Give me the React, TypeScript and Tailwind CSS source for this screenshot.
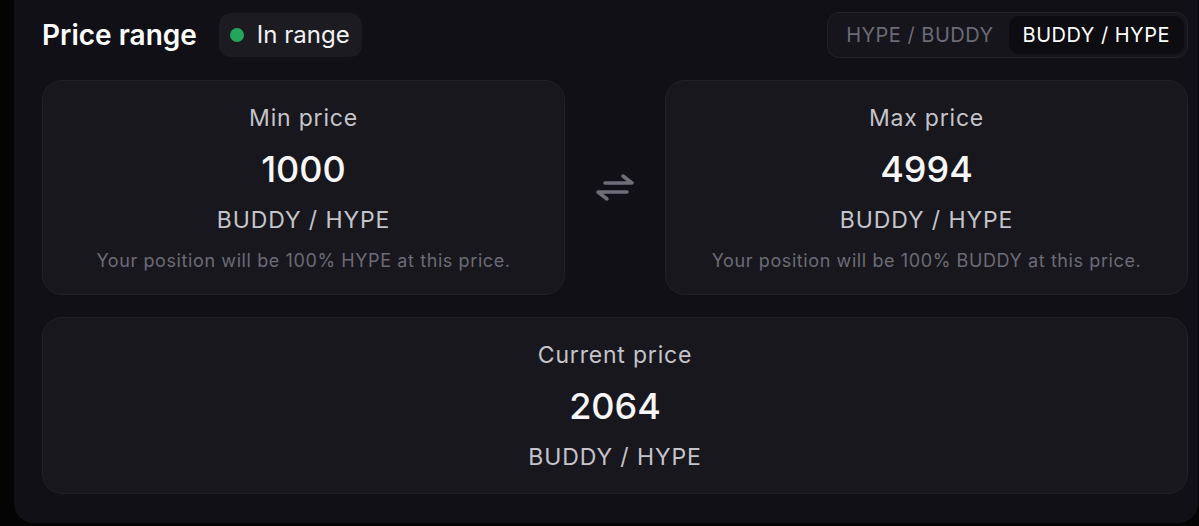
import React from 'react';

const SwapIcon: React.FC = () => (
  <svg width="40" height="30" viewBox="0 0 40 30" fill="none" stroke="#6e6d7a" strokeWidth="3.5" strokeLinecap="round" strokeLinejoin="round">
    <path d="M10 10H37L28 3" />
    <path d="M32 19H3L12 26" />
  </svg>
);

interface PriceCardProps {
  label: string;
  value: string;
  pair: string;
  note?: string;
}

const PriceCard: React.FC<PriceCardProps> = ({ label, value, pair, note }) => {
  return (
    <div className="flex flex-col items-center rounded-[20px] border border-[#222128] bg-[#18171d] pt-[22px] pb-[21px]">
      <p className="text-[23px] leading-[30px] tracking-[0.8px] text-[#c5c4cb]">{label}</p>
      <p className="mt-[14px] text-[36px] leading-[44px] font-medium text-[#f7f7f9]">{value}</p>
      <p className="mt-[14px] text-[23px] leading-[30px] tracking-[0.9px] text-[#c5c4cb]">{pair}</p>
      {note && <p className="mt-[14px] text-[18px] leading-[24px] tracking-[0.6px] text-[#6c6b76]">{note}</p>}
    </div>
  );
};

const App: React.FC = () => {
  return (
    <div className="h-[526px] w-full bg-[#040405] font-['Inter','Noto_Sans',sans-serif] overflow-hidden">
      <div className="ml-[14px] w-[1184px] rounded-b-[20px] bg-[#111016] pl-[28px] pr-[10px] pt-[12px] pb-[29px]">
        <div className="flex h-[46px] items-center justify-between">
          <div className="flex items-center gap-[22px]">
            <h2 className="text-[28px] font-semibold text-white">Price range</h2>
            <div className="flex h-[44px] items-center gap-[13px] rounded-[12px] bg-[#1c1b22] pl-[11px] pr-[12px]">
              <span className="h-[14px] w-[14px] rounded-full bg-[#22a65a]"></span>
              <span className="text-[24px] text-[#f2f2f4]">In range</span>
            </div>
          </div>
          <div className="flex h-[46px] items-center rounded-[12px] border border-[#222128] bg-[#16151b] p-[3px]">
            <button className="h-full rounded-[10px] px-[15px] text-[20px] tracking-[0.5px] text-[#6b6a76]">HYPE / BUDDY</button>
            <button className="h-full rounded-[10px] bg-[#0d0c11] px-[14px] text-[20px] tracking-[0.5px] text-white">BUDDY / HYPE</button>
          </div>
        </div>

        <div className="mt-[22px] grid grid-cols-[1fr_100px_1fr]">
          <PriceCard label="Min price" value="1000" pair="BUDDY / HYPE" note="Your position will be 100% HYPE at this price." />
          <div className="flex items-center justify-center">
            <SwapIcon />
          </div>
          <PriceCard label="Max price" value="4994" pair="BUDDY / HYPE" note="Your position will be 100% BUDDY at this price." />
        </div>

        <div className="mt-[22px]">
          <PriceCard label="Current price" value="2064" pair="BUDDY / HYPE" />
        </div>
      </div>
    </div>
  );
};

export default App;
